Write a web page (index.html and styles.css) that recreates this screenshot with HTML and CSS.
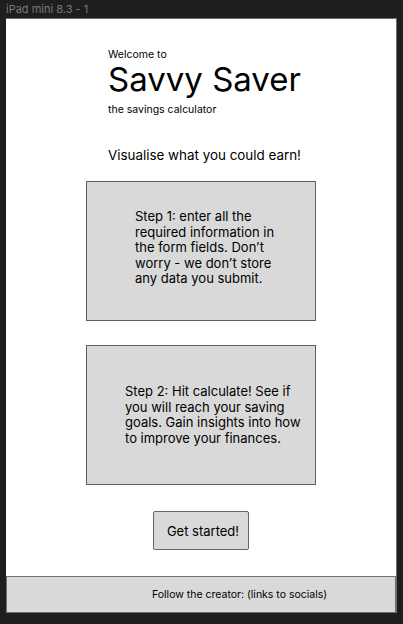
FILE: index.html
```html
<!DOCTYPE html>
<html lang="en">
<head>
<meta charset="utf-8">
<title>Savvy Saver</title>
<link rel="stylesheet" href="styles.css">
</head>
<body>
<div class="label">iPad mini 8.3 - 1</div>
<div class="frame">
  <main class="content">
    <header class="intro">
      <p class="welcome">Welcome to</p>
      <h1 class="title">Savvy Saver</h1>
      <p class="subtitle">the savings calculator</p>
      <p class="tagline">Visualise what you could earn!</p>
    </header>
    <section class="step step-one">
      <p>Step 1: enter all the<br>required information in<br>the form fields. Don’t<br>worry - we don’t store<br>any data you submit.</p>
    </section>
    <section class="step step-two">
      <p>Step 2: Hit calculate! See if<br>you will reach your saving<br>goals. Gain insights into how<br>to improve your finances.</p>
    </section>
    <button class="start">Get started!</button>
  </main>
  <footer class="footer">Follow the creator: (links to socials)</footer>
</div>
</body>
</html>
```
FILE: styles.css
```css
* { box-sizing: border-box; }
html, body {
  margin: 0;
  padding: 0;
  background: #1e1e1e;
  font-family: Inter, "Noto Sans", sans-serif;
  color: #000;
}
.label {
  height: 18px;
  line-height: 18px;
  padding-left: 6px;
  font-size: 11px;
  color: #7a7a7a;
}
.frame {
  margin-left: 6px;
  width: 391px;
  height: 595px;
  background: #fff;
  border-top: 1px solid #6e6e6e;
  border-right: 1px solid #6e6e6e;
  display: flex;
  flex-direction: column;
}
.content {
  flex: 1;
  display: flex;
  flex-direction: column;
  align-items: flex-start;
  padding-top: 30px;
}
.intro {
  padding-left: 102px;
  display: flex;
  flex-direction: column;
}
.intro p, .intro h1 { margin: 0; }
.welcome {
  font-size: 10.5px;
  line-height: 12px;
}
.intro .title {
  font-size: 33px;
  font-weight: 400;
  line-height: 36px;
  margin-top: 0;
}
.intro .subtitle {
  font-size: 10.5px;
  line-height: 13px;
  margin-top: 6px;
}
.intro .tagline {
  font-size: 13.4px;
  line-height: 17px;
  margin-top: 31px;
}
.step {
  margin-left: 80px;
  width: 230px;
  height: 140px;
  background: #d9d9d9;
  border: 1px solid #5f5f5f;
  font-size: 13px;
  line-height: 15.5px;
}
.step p { margin: 0; }
.step-one {
  margin-top: 17px;
  padding: 27px 0 0 48px;
}
.step-two {
  margin-top: 24px;
  padding: 38px 0 0 38px;
}
.start {
  margin-left: 147px;
  margin-top: 26px;
  width: 96px;
  height: 39px;
  background: #d9d9d9;
  border: 1px solid #666;
  border-radius: 2px;
  font-family: Inter, "Noto Sans", sans-serif;
  font-size: 13px;
  color: #000;
  padding: 0 0 0 4px;
}
.footer {
  height: 37px;
  background: #d9d9d9;
  border: 1px solid #707070;
  font-size: 10.5px;
  line-height: 36px;
  padding-left: 145px;
}
```
